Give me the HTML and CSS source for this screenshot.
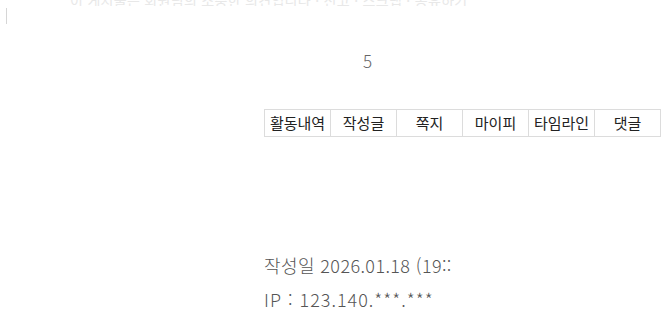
FILE: index.html
```html
<!DOCTYPE html>
<html lang="ko">
<head>
<meta charset="utf-8">
<link rel="stylesheet" href="styles.css">
</head>
<body>
<div class="topline">이 게시물은 회원님의 소중한 의견입니다 · 신고 · 스크랩 · 공유하기</div>
<div class="page">
  <div class="side"><span class="tick"></span></div>
  <div class="main">
    <div class="count">5</div>
    <table class="tabs">
      <tr>
        <td>활동내역</td>
        <td>작성글</td>
        <td>쪽지</td>
        <td>마이피</td>
        <td>타임라인</td>
        <td>댓글</td>
      </tr>
    </table>
    <div class="meta">
      <div class="date">작성일 2026.01.18 (19::</div>
      <div class="ip">IP : 123.140.***.***</div>
    </div>
  </div>
</div>
</body>
</html>
```

FILE: styles.css
```css
html, body {
  margin: 0;
  padding: 0;
  background: #fff;
  overflow: hidden;
}
body {
  font-family: "Noto Sans CJK KR", "Noto Sans", sans-serif;
  color: #333;
  width: 662px;
  height: 316px;
}
.topline {
  height: 6px;
  overflow: hidden;
  padding-left: 70px;
  font-size: 14px;
  line-height: 0;
  color: #e8e8e8;
  white-space: nowrap;
  letter-spacing: 0.3px;
}
.page {
  display: flex;
}
.side {
  width: 264px;
  flex: none;
}
.tick {
  display: block;
  width: 1px;
  height: 16px;
  margin: 2px 0 0 6px;
  background: #d6d6d6;
}
.main {
  flex: 1;
}
.count {
  margin: 44px 0 0 99px;
  font-size: 17px;
  line-height: 22px;
  color: #666;
  font-weight: 300;
}
.tabs {
  margin-top: 37px;
  border-collapse: collapse;
}
.tabs td {
  width: 65px;
  height: 26px;
  padding: 0;
  border: 1px solid #dcdcdc;
  text-align: center;
  font-size: 15px;
  line-height: 26px;
  color: #222;
  font-weight: 400;
}
.meta {
  margin-top: 111px;
  font-size: 18px;
  color: #555;
  font-weight: 300;
  letter-spacing: 0.4px;
}
.date {
  line-height: 34px;
}
.ip {
  line-height: 34px;
  letter-spacing: 1px;
}
```
